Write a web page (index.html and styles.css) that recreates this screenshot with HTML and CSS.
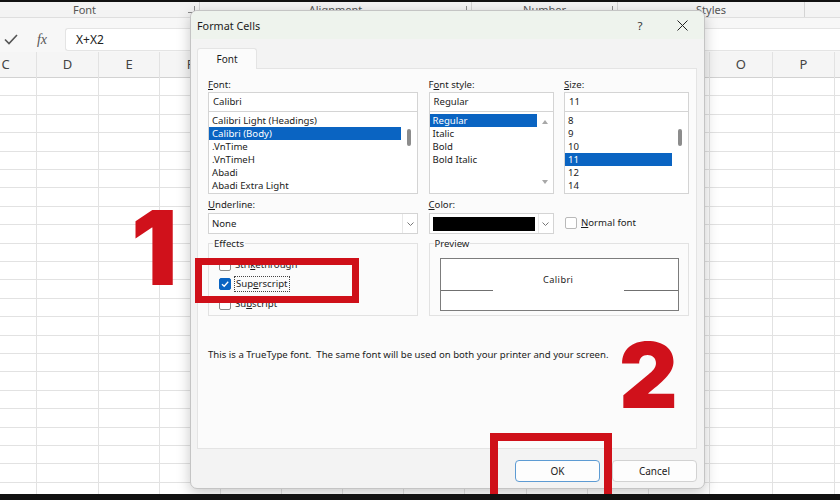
FILE: index.html
```html
<!DOCTYPE html>
<html>
<head lang="en">
    <meta charset="UTF-8">
    <title>Format Cells</title>
    <link rel="stylesheet" href="styles.css">
</head>
<body>
<div class="screen">
    <div class="ribbon_labels">
        <div class="group group_font">Font<i class="launcher"></i></div>
        <div class="group group_align">Alignment<i class="launcher"></i></div>
        <div class="group group_number">Number<i class="launcher"></i></div>
        <div class="group group_styles">Styles</div>
        <div class="group group_rest"></div>
    </div>
    <div class="formula_bar">
        <span class="fb_check">
            <svg width="14" height="11" viewBox="0 0 14 11"><path d="M1 5.5 L5 9.5 L13 1" fill="none" stroke="#555" stroke-width="1.6"/></svg>
        </span>
        <span class="fb_fx">fx</span>
        <div class="fb_input">X+X2</div>
    </div>
    <div class="sheet">
        <div class="col"><div class="col_head">C</div></div>
        <div class="col"><div class="col_head">D</div></div>
        <div class="col"><div class="col_head">E</div></div>
        <div class="col"><div class="col_head">F</div></div>
        <div class="col"><div class="col_head">G</div></div>
        <div class="col"><div class="col_head">H</div></div>
        <div class="col"><div class="col_head">I</div></div>
        <div class="col"><div class="col_head">J</div></div>
        <div class="col"><div class="col_head">K</div></div>
        <div class="col"><div class="col_head">L</div></div>
        <div class="col"><div class="col_head">M</div></div>
        <div class="col"><div class="col_head">N</div></div>
        <div class="col"><div class="col_head">O</div></div>
        <div class="col"><div class="col_head">P</div></div>
        <div class="col"><div class="col_head"></div></div>
    </div>

    <div class="dialog">
        <div class="dlg_title">
            <span>Format Cells</span>
            <span class="dlg_help">?</span>
            <span class="dlg_close">
                <svg width="11" height="11" viewBox="0 0 11 11"><path d="M0.5 0.5 L10.5 10.5 M10.5 0.5 L0.5 10.5" stroke="#222" stroke-width="1"/></svg>
            </span>
        </div>
        <div class="dlg_body">
            <div class="tabs"><div class="tab">Font</div></div>
            <div class="panel">
                <div class="pickers">
                    <div class="picker">
                        <label><u>F</u>ont:</label>
                        <div class="field">Calibri</div>
                        <div class="list">
                            <ul>
                                <li>Calibri Light (Headings)</li>
                                <li class="sel">Calibri (Body)</li>
                                <li>.VnTime</li>
                                <li>.VnTimeH</li>
                                <li>Abadi</li>
                                <li>Abadi Extra Light</li>
                            </ul>
                            <div class="scroll"><i class="thumb"></i></div>
                        </div>
                    </div>
                    <div class="picker">
                        <label>F<u>o</u>nt style:</label>
                        <div class="field">Regular</div>
                        <div class="list">
                            <ul>
                                <li class="sel">Regular</li>
                                <li>Italic</li>
                                <li>Bold</li>
                                <li>Bold Italic</li>
                            </ul>
                            <div class="scroll scroll_arrows"><i class="arrow_up"></i><i class="arrow_down"></i></div>
                        </div>
                    </div>
                    <div class="picker">
                        <label><u>S</u>ize:</label>
                        <div class="field">11</div>
                        <div class="list">
                            <ul>
                                <li>8</li>
                                <li>9</li>
                                <li>10</li>
                                <li class="sel">11</li>
                                <li>12</li>
                                <li>14</li>
                            </ul>
                            <div class="scroll"><i class="thumb"></i></div>
                        </div>
                    </div>

                    <div class="picker">
                        <label class="gap_label"><u>U</u>nderline:</label>
                        <div class="combo">
                            <div class="combo_val">None</div>
                            <div class="combo_btn"><svg width="7" height="4" viewBox="0 0 7 4"><path d="M0.5 0.5 L3.5 3.5 L6.5 0.5" fill="none" stroke="#777"/></svg></div>
                        </div>
                    </div>
                    <div class="picker">
                        <label class="gap_label"><u>C</u>olor:</label>
                        <div class="combo">
                            <div class="combo_val"><span class="swatch"></span></div>
                            <div class="combo_btn"><svg width="7" height="4" viewBox="0 0 7 4"><path d="M0.5 0.5 L3.5 3.5 L6.5 0.5" fill="none" stroke="#777"/></svg></div>
                        </div>
                    </div>
                    <div class="picker picker_end">
                        <div class="check_row">
                            <span class="box box_dim"></span>
                            <span><u>N</u>ormal font</span>
                        </div>
                    </div>

                    <fieldset class="effects">
                        <legend>Effects</legend>
                        <div class="check_row"><span class="box"></span><span>Stri<u>k</u>ethrough</span></div>
                        <div class="check_row">
                            <span class="box box_on"><svg width="10" height="10" viewBox="0 0 10 10"><path d="M2 5.2 L4.2 7.3 L8.2 2.8" fill="none" stroke="#fff" stroke-width="1.3"/></svg></span>
                            <span class="focus">Sup<u>e</u>rscript</span>
                        </div>
                        <div class="check_row"><span class="box"></span><span>Su<u>b</u>script</span></div>
                    </fieldset>
                    <fieldset class="preview">
                        <legend>Preview</legend>
                        <div class="preview_box">
                            <i class="base_line"></i>
                            <span class="preview_text">Calibri</span>
                            <i class="base_line"></i>
                        </div>
                    </fieldset>
                </div>
                <p class="note">This is a TrueType font.&nbsp; The same font will be used on both your printer and your screen.</p>
            </div>
            <div class="buttons">
                <button class="btn btn_ok">OK</button>
                <button class="btn">Cancel</button>
            </div>
        </div>
    </div>

    <div class="mark mark1"></div>
    <div class="mark mark2"></div>
    <div class="num num1">1</div>
    <div class="num num2">2</div>
</div>
</body>
</html>
```

FILE: styles.css
```css
* {
    box-sizing: border-box;
}
body {
    margin: 0;
    background: #111;
    overflow: hidden;
    font-family: "Noto Sans", "Open Sans", sans-serif;
}
.screen {
    position: relative;
    width: 840px;
    height: 492px;
    margin-top: 2px;
    background: #fff;
    display: flex;
    flex-direction: column;
}

/* ribbon group captions */
.ribbon_labels {
    display: flex;
    height: 16px;
    background: #f3f3f3;
    border-bottom: 1px solid #dedede;
    font-size: 11px;
    color: #555;
}
.group {
    position: relative;
    display: flex;
    justify-content: center;
    line-height: 15px;
    border-right: 1px solid #d4d4d4;
}
.group_font {
    width: 200px;
    padding-right: 30px;
}
.group_align {
    width: 272px;
}
.group_number {
    width: 146px;
}
.group_styles {
    width: 187px;
}
.group_rest {
    flex: 1;
    border-right: 0;
}
.launcher {
    position: absolute;
    right: 4px;
    top: 4px;
    width: 7px;
    height: 7px;
    border-right: 1px solid #8a8a8a;
    border-bottom: 1px solid #8a8a8a;
}

/* formula bar */
.formula_bar {
    display: flex;
    align-items: center;
    height: 34px;
    padding-top: 10px;
    padding-bottom: 1px;
    background: #f7f7f7;
}
.fb_check {
    width: 22px;
    display: flex;
    justify-content: center;
}
.fb_fx {
    width: 40px;
    text-align: center;
    font-family: "Liberation Serif", serif;
    font-style: italic;
    font-size: 14px;
    color: #555;
}
.fb_input {
    flex: 1;
    height: 23px;
    margin-left: 3px;
    padding-left: 10px;
    background: #fff;
    border: 1px solid #e4e4e4;
    border-right: 0;
    border-radius: 3px 0 0 3px;
    font-size: 12px;
    line-height: 21px;
    color: #222;
}

/* grid of cells */
.sheet {
    flex: 1;
    display: grid;
    grid-template-columns: 62px 62px 61px repeat(9, 61.1px) 63px 62px 62px;
    margin-left: -25px;
    overflow: hidden;
    background: repeating-linear-gradient(#fff 0, #fff 17.4px, #e2e2e2 17.4px, #e2e2e2 18.4px) 0 26px;
}
.col {
    border-right: 1px solid #e2e2e2;
}
.col_head {
    height: 26px;
    background: #f5f5f5;
    border-bottom: 1px solid #d2d2d2;
    text-align: center;
    font-size: 13px;
    line-height: 25px;
    color: #444;
}

/* dialog */
.dialog {
    position: absolute;
    left: 190px;
    top: 8px;
    width: 515px;
    display: flex;
    flex-direction: column;
    background: #f3f3f3;
    border: 1px solid #c4c4c4;
    border-radius: 7px;
    box-shadow: 0 4px 14px rgba(0, 0, 0, 0.22);
    font-size: 9.6px;
    color: #1b1b1b;
}
.dlg_title {
    display: flex;
    align-items: center;
    height: 28px;
    padding: 0 8px 0 6px;
    background: #eef3ed;
    border-radius: 7px 7px 0 0;
    font-size: 10.8px;
}
.dlg_help {
    margin-left: auto;
    margin-right: 18px;
    width: 20px;
    text-align: center;
    font-size: 11.5px;
    color: #333;
}
.dlg_close {
    width: 28px;
    display: flex;
    justify-content: center;
}
.dlg_body {
    padding: 9px 7px 6px 6px;
}
.tabs {
    display: flex;
}
.tab {
    position: relative;
    width: 60px;
    height: 21px;
    margin-bottom: -1px;
    background: #fbfbfb;
    border: 1px solid #e4e4e4;
    border-bottom: 0;
    border-radius: 3px 3px 0 0;
    text-align: center;
    line-height: 20px;
    font-size: 10px;
}
.panel {
    height: 381px;
    padding: 9px 9px 0 10px;
    background: #fbfbfb;
    border: 1px solid #e4e4e4;
}
.pickers {
    display: grid;
    grid-template-columns: 210px 125px 125px;
    column-gap: 10.5px;
}
.picker label {
    display: block;
    height: 13px;
    line-height: 13px;
    margin-bottom: 1px;
}
.picker .gap_label {
    margin-top: 4px;
    margin-bottom: 2px;
}
.picker_end {
    display: flex;
    align-items: flex-end;
}
.field {
    height: 20px;
    padding: 0 4px;
    background: #fff;
    border: 1px solid #d4d4d4;
    line-height: 18px;
}
.list {
    display: flex;
    height: 83px;
    margin-top: -1px;
    background: #fff;
    border: 1px solid #d4d4d4;
}
.list ul {
    flex: 1;
    margin: 0;
    padding: 2px 0 0 0;
    list-style: none;
}
.list li {
    height: 13px;
    line-height: 13px;
    padding-left: 3px;
    white-space: nowrap;
}
.list li.sel {
    background: #0a64c2;
    color: #fff;
}
.scroll {
    width: 16px;
    display: flex;
    justify-content: center;
}
.thumb {
    width: 4px;
    height: 17px;
    margin-top: 17px;
    background: #8c8c8c;
    border-radius: 2px;
}
.scroll_arrows {
    flex-direction: column;
    align-items: center;
    justify-content: space-between;
    padding: 8px 0 9px;
}
.arrow_up,
.arrow_down {
    width: 0;
    height: 0;
    border-left: 3.5px solid transparent;
    border-right: 3.5px solid transparent;
}
.arrow_up {
    border-bottom: 4px solid #a8a8a8;
}
.arrow_down {
    border-top: 4px solid #a8a8a8;
}
.combo {
    display: flex;
    height: 21px;
    background: #fff;
    border: 1px solid #d4d4d4;
}
.combo_val {
    flex: 1;
    display: flex;
    align-items: center;
    padding: 0 3px;
}
.swatch {
    flex: 1;
    height: 14px;
    background: #000;
}
.combo_btn {
    width: 15px;
    display: flex;
    align-items: center;
    justify-content: center;
    border-left: 1px solid #e8e8e8;
}
.check_row {
    display: flex;
    align-items: center;
    gap: 4px;
    height: 19.5px;
}
.picker_end .check_row {
    height: 21px;
    padding-left: 1px;
    padding-bottom: 2px;
}
.box {
    width: 12px;
    height: 12px;
    background: #fff;
    border: 1px solid #8c8c8c;
    border-radius: 2px;
}
.box_dim {
    border-color: #b9b9b9;
}
.box_on {
    display: flex;
    align-items: center;
    justify-content: center;
    background: #0a64c2;
    border-color: #0a64c2;
}
.focus {
    outline: 1px dotted #444;
    padding: 0 1px;
    line-height: 14px;
}
fieldset {
    margin: 3px 0 0 0;
    height: 79px;
    min-width: 0;
    padding: 0 9px 0 10px;
    border: 1px solid #e2e2e2;
}
legend {
    margin-left: -6px;
    padding: 0 1px;
    line-height: 13px;
}
.effects .check_row:first-of-type {
    margin-top: 5px;
}
.preview {
    grid-column: 2 / 4;
}
.preview_box {
    display: grid;
    grid-template-columns: 52px 1fr 54px;
    height: 53px;
    margin-top: 8px;
    background: #fff;
    border: 1px solid #7c7c7c;
}
.base_line {
    height: 32px;
    border-bottom: 1px solid #707070;
}
.preview_text {
    padding-top: 14px;
    text-align: center;
    font-size: 9.2px;
    letter-spacing: 0.4px;
}
.note {
    margin: 32px 0 0 0;
    line-height: 13px;
}
.buttons {
    display: flex;
    justify-content: flex-end;
    gap: 12px;
    margin-top: 11px;
}
.btn {
    width: 85px;
    height: 22px;
    padding: 0;
    background: #fdfdfd;
    border: 1px solid #d2d2d2;
    border-radius: 4px;
    font-family: inherit;
    font-size: 10px;
    color: #1b1b1b;
}
.btn_ok {
    border-color: #5d9bd3;
}

/* annotations */
.mark {
    position: absolute;
    border: 7px solid #cf1019;
}
.mark1 {
    left: 195px;
    top: 256px;
    width: 164px;
    height: 45px;
}
.mark2 {
    left: 490px;
    top: 431px;
    width: 122px;
    height: 80px;
    border-width: 8px;
}
.num {
    position: absolute;
    font-family: Inter, "Liberation Sans", sans-serif;
    font-weight: 900;
    line-height: 1;
    color: #d0111b;
}
.num1 {
    left: 131px;
    top: 194px;
    font-size: 103px;
}
.num2 {
    left: 619px;
    top: 328px;
    font-size: 91px;
}
```
